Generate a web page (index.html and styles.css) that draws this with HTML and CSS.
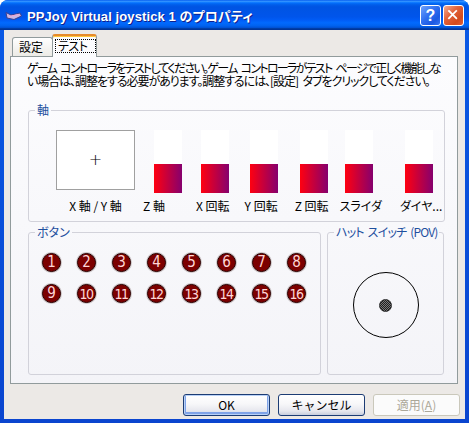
FILE: index.html
```html
<!DOCTYPE html>
<html lang="ja">
<head>
<meta charset="utf-8">
<link rel="stylesheet" href="styles.css">
</head>
<body>
<div class="window">
  <div class="titlebar">
    <svg class="app-icon" viewBox="0 0 17 12" width="17" height="12">
      <path d="M1 2.5 L6 5 L15 3 L16.5 6 L9 9.5 L2 8 Z" fill="#c9b7e4" stroke="#3a3f8e" stroke-width="1"/>
      <path d="M4 6.5 L14 4.5" stroke="#f2a6cf" stroke-width="1.2"/>
    </svg>
    <span class="title">PPJoy Virtual joystick 1 のプロパティ</span>
    <div class="caption-btns">
      <div class="cbtn help">?</div>
      <div class="cbtn close">
        <svg viewBox="0 0 21 21" width="19" height="19"><path d="M5.5 5.5 L13.5 13.5 M13.5 5.5 L5.5 13.5" stroke="#fff" stroke-width="2" stroke-linecap="square"/></svg>
      </div>
    </div>
  </div>
  <div class="client">
    <div class="tabs">
      <div class="tab">設定</div>
      <div class="tab active"><span class="focus">テスト</span></div>
    </div>
    <div class="panel">
      <p class="desc"><span class="line l1">ゲーム コントローラをテストしてください。ゲーム コントローラがテスト ページで正しく機能しな</span><span class="line l2">い場合は、調整をする必要があります。調整するには、[設定] タブをクリックしてください。</span></p>
      <fieldset class="group axes">
        <legend>軸</legend>
        <div class="axes-row">
          <div class="axis xy"><div class="xybox">+</div><div class="alabel">X 軸 / Y 軸</div></div>
          <div class="axis bar-axis"><div class="bar"><div class="fill"></div></div><div class="alabel">Z 軸</div></div>
          <div class="axis bar-axis"><div class="bar"><div class="fill"></div></div><div class="alabel">X 回転</div></div>
          <div class="axis bar-axis"><div class="bar"><div class="fill"></div></div><div class="alabel">Y 回転</div></div>
          <div class="axis bar-axis"><div class="bar"><div class="fill"></div></div><div class="alabel">Z 回転</div></div>
          <div class="axis bar-axis"><div class="bar"><div class="fill"></div></div><div class="alabel">スライダ</div></div>
          <div class="axis bar-axis"><div class="bar"><div class="fill"></div></div><div class="alabel">ダイヤ...</div></div>
        </div>
      </fieldset>
      <div class="lower">
        <fieldset class="group buttons">
          <legend>ボタン</legend>
          <div class="btn-grid">
            <div class="jbtn">1</div><div class="jbtn">2</div><div class="jbtn">3</div><div class="jbtn">4</div>
            <div class="jbtn">5</div><div class="jbtn">6</div><div class="jbtn">7</div><div class="jbtn">8</div>
            <div class="jbtn">9</div><div class="jbtn two">10</div><div class="jbtn two">11</div><div class="jbtn two">12</div>
            <div class="jbtn two">13</div><div class="jbtn two">14</div><div class="jbtn two">15</div><div class="jbtn two">16</div>
          </div>
        </fieldset>
        <fieldset class="group hat">
          <legend>ハット スイッチ (POV)</legend>
          <div class="pov"><div class="dot"></div></div>
        </fieldset>
      </div>
    </div>
    <div class="footer">
      <button class="btn default">OK</button>
      <button class="btn">キャンセル</button>
      <button class="btn disabled">適用(<u>A</u>)</button>
    </div>
  </div>
</div>
</body>
</html>
```

FILE: styles.css
```css
* { box-sizing: border-box; }
html, body { margin: 0; padding: 0; }
body {
  width: 469px;
  height: 423px;
  overflow: hidden;
  background: #ffffff;
  font-family: "Noto Sans CJK JP", "Liberation Sans", sans-serif;
  font-size: 12px;
  color: #000;
  font-feature-settings: "palt";
}

.window {
  width: 469px;
  height: 423px;
  display: flex;
  flex-direction: column;
  background: linear-gradient(#0a5ae6, #0a45cf);
  border-radius: 8px 8px 0 0;
  overflow: hidden;
}

.titlebar {
  height: 30px;
  flex: none;
  display: flex;
  align-items: center;
  padding: 0 5px 0 5px;
  background: linear-gradient(to bottom, #0058ee 0%, #3593ff 4%, #288eff 6%, #127dff 8%, #036ffc 10%, #0262ee 14%, #0057e5 20%, #0054e3 24%, #0055eb 56%, #005bf5 66%, #026afe 76%, #0062ef 86%, #0052d6 92%, #0040ab 94%, #003092 100%);
}
.app-icon { flex: none; margin: 1px 5px 0 0; }
.title {
  flex: 1;
  color: #fff;
  font-family: "Liberation Sans", "Noto Sans CJK JP", sans-serif;
  font-weight: bold;
  font-size: 13px;
  letter-spacing: 0.1px;
  white-space: nowrap;
  text-shadow: 1px 1px 0 #0f1e8c;
}
.caption-btns { display: flex; gap: 2px; margin-top: 1px; }
.cbtn {
  width: 21px;
  height: 21px;
  border: 1px solid #fff;
  border-radius: 3px;
  display: flex;
  align-items: center;
  justify-content: center;
}
.help {
  background: linear-gradient(135deg, #6fa2fb 0%, #2f6ff0 45%, #1b58e2 75%, #3a78f2 100%);
  color: #fff;
  font-family: "Liberation Sans", sans-serif;
  font-weight: bold;
  font-size: 16px;
}
.close {
  background: linear-gradient(135deg, #f3ab92 0%, #e2623a 40%, #d24a1d 75%, #e0603a 100%);
}

.client {
  flex: 1;
  margin: 0 4px 4px;
  background: #ece9e6;
  display: flex;
  flex-direction: column;
}

.tabs {
  height: 26px;
  flex: none;
  display: flex;
  align-items: flex-end;
  padding-left: 8px;
  position: relative;
  z-index: 1;
}
.tab {
  width: 41px;
  height: 19px;
  border: 1px solid #919b9c;
  border-bottom: none;
  border-radius: 3px 3px 0 0;
  background: linear-gradient(#ffffff, #ecebe6);
  padding-left: 6px;
  line-height: 18px;
}
.tab.active {
  width: 45px;
  height: 23px;
  margin-left: -1px;
  margin-bottom: -1px;
  padding: 3px 0 0 1px;
  background: #fcfcfe;
  border-top: 2px solid #e68b2c;
  box-shadow: inset 0 1px 0 #ffc73c;
}
.focus {
  display: block;
  width: 41px;
  height: 14px;
  margin-left: 1px;
  border: 1px dotted #000;
  line-height: 12px;
  padding-left: 2px;
  letter-spacing: -0.5px;
}

.panel {
  height: 328px;
  flex: none;
  margin: 0 7px 0 6px;
  border: 1px solid #919b9c;
  background: linear-gradient(#fcfcfe, #f4f4f8);
  display: flex;
  flex-direction: column;
}
.desc {
  margin: 0;
  padding: 4px 0 0 16px;
  height: 30px;
  line-height: 13px;
  white-space: nowrap;
}
.line { display: block; word-spacing: 3px; }
.l1 { letter-spacing: -1.7px; }
.l2 { letter-spacing: -1.05px; }

.group {
  margin: 0;
  padding: 0;
  border: 1px solid #d2d2da;
  border-radius: 3px;
  min-inline-size: 0;
}
.group legend {
  margin-left: 6px;
  padding: 0 2px;
  line-height: 14px;
  color: #1e4f9e;
  white-space: nowrap;
}
.hat legend { letter-spacing: -0.8px; word-spacing: 2px; padding: 0 1px 0 2px; }

.axes {
  margin: 16px 12px 0 17px;
  padding-bottom: 9px;
}
.axes-row {
  display: flex;
  align-items: flex-start;
  margin: 13px 0 0 27px;
}
.axis {
  display: flex;
  flex-direction: column;
  align-items: flex-start;
}
.axis.xy { width: 79px; align-items: center; }
.xybox {
  width: 79px;
  height: 60px;
  margin-bottom: 3px;
  border: 1px solid #a0a0a0;
  background: #fff;
  display: flex;
  align-items: center;
  justify-content: center;
  font-family: "DejaVu Sans", sans-serif;
  font-weight: 300;
  font-size: 16px;
  line-height: 1;
  padding-bottom: 1px;
}
.bar {
  width: 28px;
  height: 63px;
  background: #ffffff;
  display: flex;
  flex-direction: column;
  justify-content: flex-end;
}
.fill {
  height: 29px;
  background: linear-gradient(to right, #ff0010, #86006e);
}
.alabel {
  margin-top: 6px;
  line-height: 13px;
  white-space: nowrap;
}
.bar-axis .alabel { margin-left: -5px; }
.bar-axis:nth-child(2) { margin-left: 19px; }
.bar-axis:nth-child(2) .alabel { margin-left: -11px; }
.bar-axis:nth-child(3) { margin-left: 19px; }
.bar-axis:nth-child(4) { margin-left: 20px; }
.bar-axis:nth-child(5) { margin-left: 22px; }
.bar-axis:nth-child(6) { margin-left: 16px; }
.bar-axis:nth-child(7) { margin-left: 23px; }

.lower {
  display: flex;
  gap: 6px;
  margin: 3px 13px 0 17px;
  height: 150px;
}
.buttons { width: 293px; height: 150px; flex: none; }
.hat { flex: 1; height: 150px; }

.btn-grid {
  display: grid;
  grid-template-columns: repeat(8, 19px);
  column-gap: 16px;
  row-gap: 12px;
  margin: 14px 0 0 13px;
}
.jbtn {
  width: 19px;
  height: 19px;
  border-radius: 50%;
  background: #7c0000;
  border: 1px solid #2a0000;
  box-shadow: 0 0 0 1px rgba(120, 100, 100, 0.35);
  color: #ffd6d6;
  display: flex;
  align-items: center;
  justify-content: center;
  font-family: "Liberation Sans Narrow", "DejaVu Sans Condensed", "Liberation Sans", sans-serif;
  font-size: 15px;
  line-height: 1;
}
.jbtn.two { letter-spacing: -1.5px; font-size: 14px; padding-right: 1px; }

.pov {
  width: 66px;
  height: 66px;
  margin: 33px auto 0;
  border: 1px solid #000;
  border-radius: 50%;
  display: flex;
  align-items: center;
  justify-content: center;
}
.dot {
  width: 13px;
  height: 13px;
  border-radius: 50%;
  border: 1px solid #2a2a2a;
  background: repeating-conic-gradient(#1e1e1e 0 25%, #7a7a7a 0 50%) 0 0 / 2px 2px;
}

.footer {
  flex: 1;
  display: flex;
  justify-content: flex-end;
  align-items: flex-start;
  gap: 8px;
  padding: 10px 5px 0 0;
}
.btn {
  width: 87px;
  height: 22px;
  padding: 0;
  font-family: "Noto Sans CJK JP", "Liberation Sans", sans-serif;
  font-size: 12px;
  line-height: 20px;
  color: #000;
  border: 1px solid #1c3c74;
  border-radius: 3px;
  background: linear-gradient(#ffffff 0%, #f7f7f9 45%, #e6e7ee 80%, #c7cddd 100%);
}
.btn.default {
  box-shadow: inset 0 0 0 1px #b9d1f6, inset 0 -1px 0 2px #7fa3e8;
}
.btn.disabled {
  border-color: #cac8bb;
  background: #fbfbfb;
  color: #aca899;
}
.btn u { text-decoration: underline; }
```
